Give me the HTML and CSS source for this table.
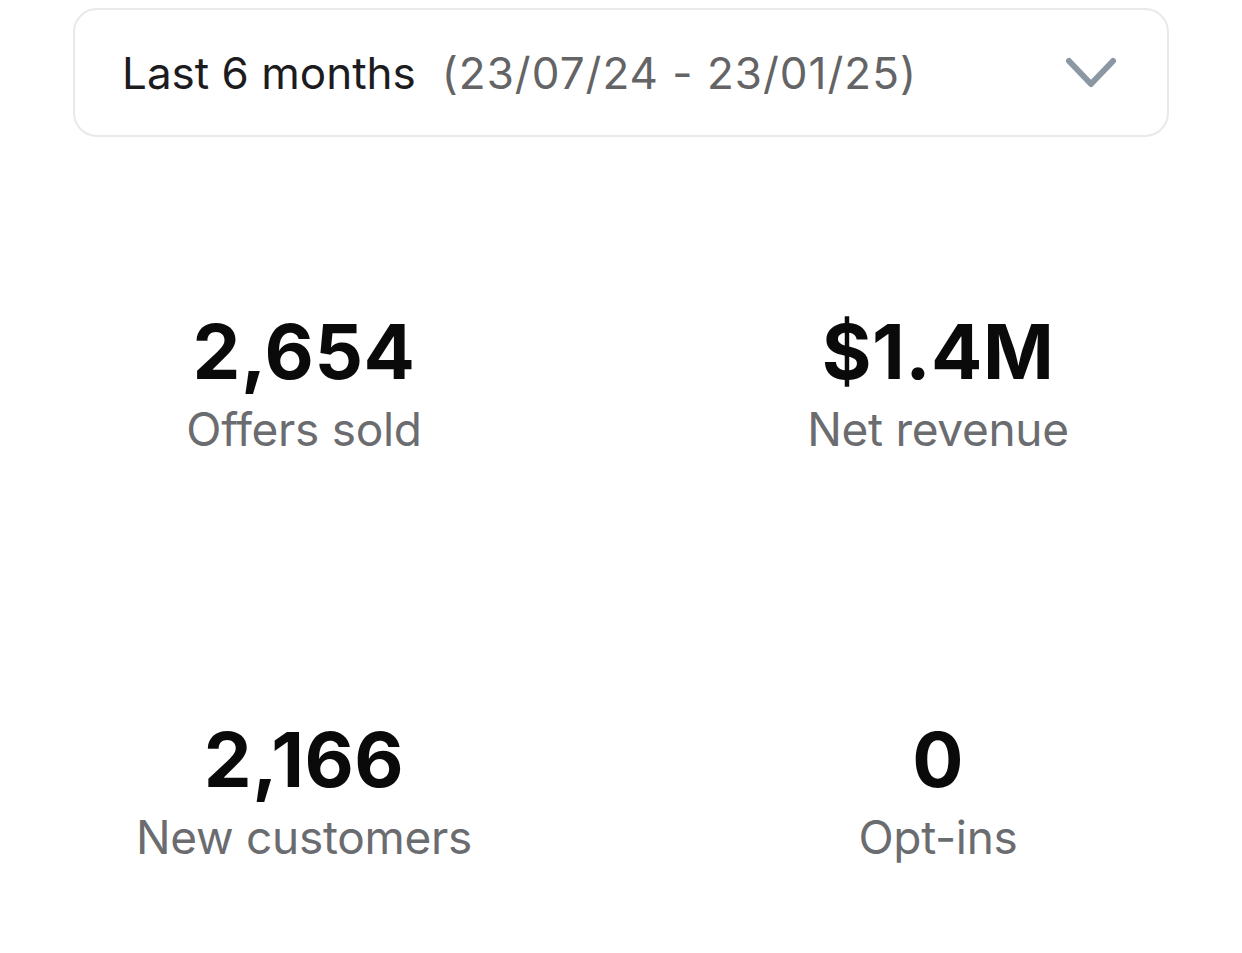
FILE: index.html
```html
<!DOCTYPE html>
<html>
<head>
<meta charset="utf-8">
<link rel="stylesheet" href="styles.css">
</head>
<body>
<div class="page">
  <div class="select">
    <div class="select-text">
      <span class="range">Last 6 months</span>
      <span class="dates">(23/07/24 - 23/01/25)</span>
    </div>
    <svg class="chevron" width="52" height="34" viewBox="0 0 52 34">
      <path d="M4 5 L26 28 L48 5" fill="none" stroke="#8c97a4" stroke-width="6" stroke-linecap="round" stroke-linejoin="round"/>
    </svg>
  </div>
  <div class="stats">
    <div class="stat">
      <div class="value">2,654</div>
      <div class="label">Offers sold</div>
    </div>
    <div class="stat">
      <div class="value">$1.4M</div>
      <div class="label">Net revenue</div>
    </div>
    <div class="stat">
      <div class="value">2,166</div>
      <div class="label">New customers</div>
    </div>
    <div class="stat">
      <div class="value">0</div>
      <div class="label">Opt-ins</div>
    </div>
  </div>
</div>
</body>
</html>
```
FILE: styles.css
```css
html, body {
  margin: 0;
  padding: 0;
  background: #ffffff;
}
body {
  font-family: Inter, "Noto Sans", sans-serif;
  width: 1242px;
  height: 953px;
  overflow: hidden;
}
.page {
  padding-top: 8px;
}
.select {
  margin: 0 73px;
  height: 125px;
  border: 2px solid #e9e9ea;
  border-radius: 24px;
  display: flex;
  align-items: center;
  justify-content: space-between;
  padding: 0 50px 0 47px;
  box-sizing: content-box;
}
.select-text {
  font-size: 44px;
  display: flex;
  gap: 26px;
  align-items: baseline;
}
.range {
  color: #1c1c1e;
}
.dates {
  color: #646466;
  letter-spacing: 1px;
}
.chevron {
  display: block;
}
.stats {
  display: grid;
  grid-template-columns: 608px 608px;
  column-gap: 26px;
  row-gap: 264px;
  padding-top: 176px;
}
.stat {
  display: flex;
  flex-direction: column;
  align-items: center;
}
.value {
  font-size: 76px;
  font-weight: 700;
  color: #0a0a0a;
  line-height: 76px;
  letter-spacing: 0.5px;
}
.label {
  font-size: 46px;
  color: #6b6c70;
  line-height: 56px;
  margin-top: 12px;
  letter-spacing: -0.3px;
}
```
